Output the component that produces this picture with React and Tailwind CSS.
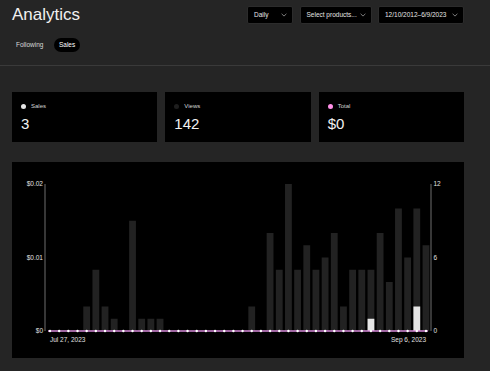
import React from "react";

const views = [0, 0, 0, 0, 2, 5, 2, 1, 0, 9, 1, 1, 1, 0, 0, 0, 0, 0, 0, 0, 0, 0, 2, 0, 8, 5, 12, 5, 7, 5, 6, 8, 2, 5, 5, 5, 8, 4, 10, 6, 10, 7];
const sales = views.map((_, i) => (i === 35 ? 1 : i === 40 ? 2 : 0));

const font = { fontFamily: '"Liberation Sans", Arial, sans-serif' };

function Chevron() {
  return (
    <svg width="6" height="4" viewBox="0 0 6 4" fill="none" className="shrink-0">
      <path d="M0.6 0.8 L3 3.1 L5.4 0.8" stroke="#9a9a9a" strokeWidth="0.8" />
    </svg>
  );
}

function Select({ label, width }) {
  return (
    <div
      className={`flex items-center justify-between h-[18px] pl-[6px] pr-[5px] bg-black border border-[#2c2c2c] rounded-[2px] text-[6.5px] text-[#e6e6e6] whitespace-nowrap ${width}`}
    >
      <span>{label}</span>
      <Chevron />
    </div>
  );
}

function StatCard({ dot, label, value }) {
  return (
    <div className="bg-black h-[50px] flex flex-col px-[9px] pt-[10px]">
      <div className="flex items-center gap-[5px] h-[8px]">
        <span className={`w-[5px] h-[5px] rounded-full ${dot}`} />
        <span className="text-[6px] text-[#d4d4d4]">{label}</span>
      </div>
      <div className="mt-[5.5px] text-[15px] leading-[15px] text-[#f2f2f2]">{value}</div>
    </div>
  );
}

function Chart() {
  const left = 33;
  const right = 419;
  const top = 22;
  const base = 169;
  const step = 9.17;
  const unit = 12.25;
  const x0 = 38;
  return (
    <svg viewBox="0 0 452 196" width="452" height="196" className="block">
      {/* bars */}
      {views.map((v, i) =>
        v > 0 ? (
          <rect key={"v" + i} x={x0 + i * step - 3.4} y={base - v * unit} width="6.8" height={v * unit} fill="#222222" />
        ) : null
      )}
      {sales.map((v, i) =>
        v > 0 ? (
          <rect key={"s" + i} x={x0 + i * step - 3.4} y={base - v * unit} width="6.8" height={v * unit} fill="#e6e6e6" />
        ) : null
      )}

      {/* axes */}
      <line x1={left} y1={top} x2={left} y2={base} stroke="#8a8a8a" strokeWidth="0.8" />
      <line x1={right} y1={top} x2={right} y2={base} stroke="#8a8a8a" strokeWidth="0.8" />

      {/* total line */}
      <line x1={x0 - 2} y1={base} x2={x0 + 41 * step + 2} y2={base} stroke="#d68ad8" strokeWidth="1.3" />
      {views.map((_, i) => (
        <circle key={"d" + i} cx={x0 + i * step} cy={base} r="1.2" fill="#ffffff" />
      ))}

      <g fill="#e0e0e0" fontSize="6.5" style={font}>
        <text x="31" y={top + 2.3} textAnchor="end">$0.02</text>
        <text x="31" y={(top + base) / 2 + 2.3} textAnchor="end">$0.01</text>
        <text x="31" y={base + 2.3} textAnchor="end">$0</text>
        <text x="421.5" y={top + 2.3}>12</text>
        <text x="421.5" y={(top + base) / 2 + 2.3}>6</text>
        <text x="421.5" y={base + 2.3}>0</text>
        <text x="38" y="179.5">Jul 27, 2023</text>
        <text x="414" y="179.5" textAnchor="end">Sep 6, 2023</text>
      </g>
    </svg>
  );
}

export default function App() {
  return (
    <div className="w-[490px] h-[371px] bg-[#252525] text-white overflow-hidden" style={font}>
      {/* Header */}
      <div className="h-[66px] border-b border-[#3a3a3a] px-3 pr-[26px] pt-[6px]">
        <div className="flex items-center justify-between h-[18px]">
          <h1 className="text-[17px] leading-[18px] text-[#f0f0f0]">Analytics</h1>
          <div className="flex items-center gap-[6.5px]">
            <Select label="Daily" width="w-[46px]" />
            <Select label="Select products..." width="w-[72px]" />
            <Select label="12/10/2012–6/9/2023" width="w-[86px]" />
          </div>
        </div>
        <div className="flex items-center gap-[7px] mt-[14px] text-[6.5px]">
          <span className="h-[14px] px-[4px] flex items-center text-[#d8d8d8]">Following</span>
          <span className="h-[14px] px-[4.5px] flex items-center rounded-full bg-black text-white">Sales</span>
        </div>
      </div>

      {/* Content */}
      <div className="pl-3 pr-[26px] pt-[26px]">
        <div className="grid grid-cols-3 gap-2">
          <StatCard dot="bg-[#e4e4e4]" label="Sales" value="3" />
          <StatCard dot="bg-[#1e1e1e]" label="Views" value="142" />
          <StatCard dot="bg-[#ff90e8]" label="Total" value="$0" />
        </div>
        <div className="mt-[20px] h-[196px] bg-black">
          <Chart />
        </div>
      </div>
    </div>
  );
}
